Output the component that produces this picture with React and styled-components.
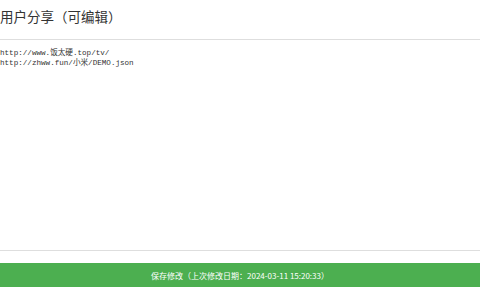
import React from 'react';
import styled, { createGlobalStyle } from 'styled-components';

const Global = createGlobalStyle`
  html, body {
    margin: 0;
    padding: 0;
    background: #fff;
    overflow: hidden;
  }
  body {
    font-family: "Noto Sans CJK SC", "Liberation Sans", sans-serif;
  }
`;

const Page = styled.div`
  width: 480px;
  height: 300px;
  display: flex;
  flex-direction: column;
  overflow: hidden;
`;

const Header = styled.div`
  height: 40px;
  display: flex;
  align-items: center;
  padding-bottom: 7px;
  border-bottom: 1px solid #dedede;
  box-sizing: border-box;
`;

const Title = styled.h2`
  margin: 0;
  font-size: 13.5px;
  font-weight: 400;
  color: #333;
  font-family: "Noto Sans CJK SC", sans-serif;
`;

const Editor = styled.pre`
  height: 211px;
  box-sizing: border-box;
  margin: 0;
  padding: 8px 0 0 0;
  border-bottom: 1px solid #dedede;
  font-family: "Liberation Mono", "Noto Sans CJK SC", monospace;
  font-size: 7.6px;
  line-height: 10px;
  color: #333;
  white-space: pre;
`;

const Footer = styled.div`
  flex: 1;
  display: flex;
  align-items: flex-start;
  padding-top: 12px;
  box-sizing: border-box;
`;

const SaveButton = styled.button`
  width: 100%;
  height: 24px;
  border: none;
  margin: 0;
  background: #4caf50;
  color: #fff;
  font-size: 8px;
  font-family: "Noto Sans CJK SC", "Liberation Sans", sans-serif;
  cursor: pointer;
`;

export default function App() {
  return (
    <Page>
      <Global />
      <Header>
        <Title>用户分享（可编辑）</Title>
      </Header>
      <Editor>{`http://www.饭太硬.top/tv/
http://zhww.fun/小米/DEMO.json`}</Editor>
      <Footer>
        <SaveButton>保存修改（上次修改日期：2024-03-11 15:20:33）</SaveButton>
      </Footer>
    </Page>
  );
}
